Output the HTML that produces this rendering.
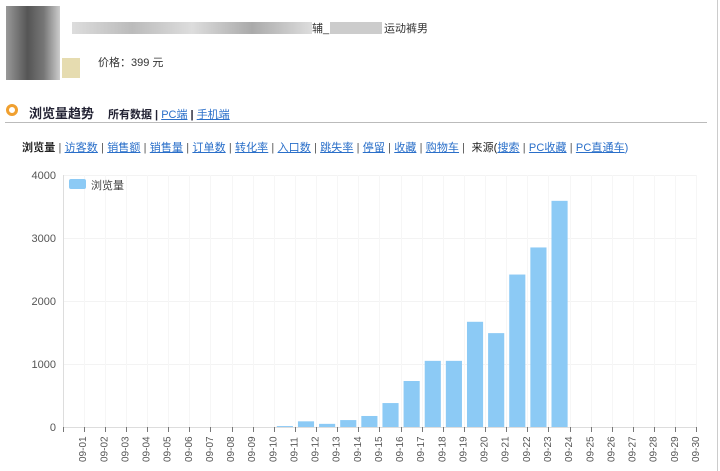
<!DOCTYPE html><html><head><meta charset="utf-8"><style>
body{margin:0;width:720px;height:471px;background:#fff;font-family:"Liberation Sans","Noto Sans CJK SC",sans-serif;position:relative;overflow:hidden}
.a{position:absolute}
a{color:#2a6fc9;text-decoration:underline}
</style></head><body>
<div class="a" style="left:6px;top:6px;width:54px;height:74px;background:linear-gradient(90deg,#999,#555 40%,#777 70%,#ccc)"></div>
<div class="a" style="left:62px;top:58px;width:18px;height:20px;background:#e6dcb0"></div>
<div class="a" style="left:72px;top:22px;width:240px;height:12px;background:linear-gradient(90deg,#ddd,#bbb,#ddd,#aaa,#ddd)"></div>
<div class="a" style="left:312px;top:20px;font-size:11px;color:#333">辅_</div>
<div class="a" style="left:330px;top:22px;width:52px;height:12px;background:#ccc"></div>
<div class="a" style="left:384px;top:20px;font-size:11px;color:#333">运动裤男</div>
<div class="a" style="left:98px;top:54px;font-size:11px;color:#333">价格：399 元</div>
<div class="a" style="left:6px;top:104px;width:6px;height:6px;border:3px solid #f0a030;border-radius:50%"></div>
<div class="a" style="left:29px;top:103px;font-size:13px;font-weight:bold;color:#223">浏览量趋势</div>
<div class="a" style="left:108px;top:106px;font-size:11px;color:#223;font-weight:bold">所有数据 | <a style="font-weight:normal">PC端</a> | <a style="font-weight:normal">手机端</a></div>
<div class="a" style="left:5px;top:122px;width:702px;height:1px;background:#bbb"></div>
<div class="a" style="left:22px;top:139px;font-size:11px;letter-spacing:0.1px;color:#555;white-space:nowrap"><b style="color:#222">浏览量</b> | <a>访客数</a> | <a>销售额</a> | <a>销售量</a> | <a>订单数</a> | <a>转化率</a> | <a>入口数</a> | <a>跳失率</a> | <a>停留</a> | <a>收藏</a> | <a>购物车</a> | &nbsp;<span style="color:#222">来源(</span><a>搜索</a> | <a>PC收藏</a> | <a>PC直通车</a><span style="color:#2a6fc9">)</span></div>
<svg class="a" style="left:0;top:0" width="720" height="471">
<g stroke="#f3f3f3" stroke-width="1">
<line x1="63" y1="175.5" x2="697" y2="175.5"/><line x1="63" y1="238.5" x2="697" y2="238.5"/><line x1="63" y1="301.5" x2="697" y2="301.5"/><line x1="63" y1="364.5" x2="697" y2="364.5"/>
</g>
<g id="vg" stroke="#f6f6f6"></g>
<line x1="63.5" y1="175" x2="63.5" y2="427" stroke="#ddd"/>
<line x1="63" y1="427.5" x2="697" y2="427.5" stroke="#ddd"/>
<g font-size="11" fill="#555" text-anchor="end" font-family="Liberation Sans,sans-serif">
<text x="56" y="179">4000</text><text x="56" y="242">3000</text><text x="56" y="305">2000</text><text x="56" y="368">1000</text><text x="56" y="431">0</text></g>
<rect x="69" y="179" width="17" height="10" rx="2" fill="#8ccaf5"/>
<text x="91" y="189" font-size="11" fill="#444">浏览量</text>
<g id="bars" fill="#8ccaf5"></g>
<g id="tk" stroke="#777"></g>
<g id="lb" font-size="10" fill="#555" font-family="Liberation Sans,sans-serif"></g>
</svg>
<div class="a" style="left:717px;top:0;width:1px;height:471px;background:#ccc"></div>
<script>
var v={11:15,12:90,13:50,14:110,15:175,16:380,17:730,18:1050,19:1050,20:1670,21:1490,22:2420,23:2850,24:3590};
var w=21.13,b="",t="",l="",g="";
for(var d=1;d<=30;d++){var x0=63+w*(d-1),x1=x0+w;
t+='<line x1="'+(x1|0)+'.5" y1="427" x2="'+(x1|0)+'.5" y2="432"/>';
g+='<line x1="'+(x1|0)+'.5" y1="175" x2="'+(x1|0)+'.5" y2="427"/>';
if(v[d]){var h=v[d]*0.063;b+='<rect x="'+(x0+2.5)+'" y="'+(427-h)+'" width="'+(w-5)+'" height="'+h+'"/>';}
var dd=(d<10?"0":"")+d;l+='<text transform="translate('+(x1+2)+',462) rotate(-90)">09-'+dd+'</text>';}
document.getElementById("bars").innerHTML=b;document.getElementById("tk").innerHTML='<line x1="63.5" y1="427" x2="63.5" y2="432"/>'+t;
document.getElementById("lb").innerHTML=l;document.getElementById("vg").innerHTML=g;
</script>
</body></html>
